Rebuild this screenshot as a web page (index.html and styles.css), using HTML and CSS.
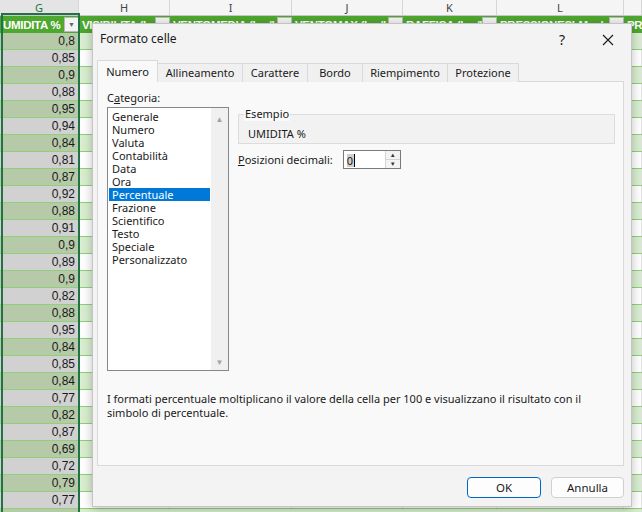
FILE: index.html
```html
<!DOCTYPE html>
<html lang="it">
<head>
  <meta charset="UTF-8" />
  <title>Formato celle</title>
  <link rel="stylesheet" href="styles.css">
</head>
<body>

  <div class="sheet">
    <div class="letters">
      <span class="sel">G</span><span>H</span><span>I</span><span>J</span><span>K</span><span>L</span><span></span>
    </div>
    <div class="heads">
      <span class="hd"><b>UMIDITA %</b><em>▼</em></span>
      <span class="hd"><b>VISIBILITA (km</b><em>▼</em></span>
      <span class="hd"><b>VENTOMEDIA (km/h</b><em>▼</em></span>
      <span class="hd"><b>VENTOMAX (km/h</b><em>▼</em></span>
      <span class="hd"><b>RAFFICA (km/h</b><em>▼</em></span>
      <span class="hd"><b>PRESSIONESLM mb</b><em>▼</em></span>
      <span class="hd"><b>PRE</b></span>
    </div>
    <div class="row odd"><span class="g">0,8</span><span></span><span></span><span></span><span></span><span></span><span></span></div>
    <div class="row"><span class="g">0,85</span><span></span><span></span><span></span><span></span><span></span><span></span></div>
    <div class="row odd"><span class="g">0,9</span><span></span><span></span><span></span><span></span><span></span><span></span></div>
    <div class="row"><span class="g">0,88</span><span></span><span></span><span></span><span></span><span></span><span></span></div>
    <div class="row odd"><span class="g">0,95</span><span></span><span></span><span></span><span></span><span></span><span></span></div>
    <div class="row"><span class="g">0,94</span><span></span><span></span><span></span><span></span><span></span><span></span></div>
    <div class="row odd"><span class="g">0,84</span><span></span><span></span><span></span><span></span><span></span><span></span></div>
    <div class="row"><span class="g">0,81</span><span></span><span></span><span></span><span></span><span></span><span></span></div>
    <div class="row odd"><span class="g">0,87</span><span></span><span></span><span></span><span></span><span></span><span></span></div>
    <div class="row"><span class="g">0,92</span><span></span><span></span><span></span><span></span><span></span><span></span></div>
    <div class="row odd"><span class="g">0,88</span><span></span><span></span><span></span><span></span><span></span><span></span></div>
    <div class="row"><span class="g">0,91</span><span></span><span></span><span></span><span></span><span></span><span></span></div>
    <div class="row odd"><span class="g">0,9</span><span></span><span></span><span></span><span></span><span></span><span></span></div>
    <div class="row"><span class="g">0,89</span><span></span><span></span><span></span><span></span><span></span><span></span></div>
    <div class="row odd"><span class="g">0,9</span><span></span><span></span><span></span><span></span><span></span><span></span></div>
    <div class="row"><span class="g">0,82</span><span></span><span></span><span></span><span></span><span></span><span></span></div>
    <div class="row odd"><span class="g">0,88</span><span></span><span></span><span></span><span></span><span></span><span></span></div>
    <div class="row"><span class="g">0,95</span><span></span><span></span><span></span><span></span><span></span><span></span></div>
    <div class="row odd"><span class="g">0,84</span><span></span><span></span><span></span><span></span><span></span><span></span></div>
    <div class="row"><span class="g">0,85</span><span></span><span></span><span></span><span></span><span></span><span></span></div>
    <div class="row odd"><span class="g">0,84</span><span></span><span></span><span></span><span></span><span></span><span></span></div>
    <div class="row"><span class="g">0,77</span><span></span><span></span><span></span><span></span><span></span><span></span></div>
    <div class="row odd"><span class="g">0,82</span><span></span><span></span><span></span><span></span><span></span><span></span></div>
    <div class="row"><span class="g">0,87</span><span></span><span></span><span></span><span></span><span></span><span></span></div>
    <div class="row odd"><span class="g">0,69</span><span></span><span></span><span></span><span></span><span></span><span></span></div>
    <div class="row"><span class="g">0,72</span><span></span><span></span><span></span><span></span><span></span><span></span></div>
    <div class="row odd"><span class="g">0,79</span><span></span><span></span><span></span><span></span><span></span><span></span></div>
    <div class="row"><span class="g">0,77</span><span></span><span></span><span></span><span></span><span></span><span></span></div>
    <div class="row odd"><span class="g"></span><span></span><span></span><span></span><span></span><span></span><span></span></div>
  </div>

  <!-- bordo della colonna selezionata -->
  <div class="sel-col"></div>

  <div class="dialog">
    <div class="titlebar">
      <span class="title">Formato celle</span>
      <span class="help">?</span>
      <span class="close">
        <svg width="12" height="12" viewBox="0 0 12 12"><path d="M1 1 L11 11 M11 1 L1 11" stroke="#1a1a1a" stroke-width="1.1" fill="none"/></svg>
      </span>
    </div>

    <div class="dlg-body">
      <div class="tabs">
        <span class="tab active">Numero</span>
        <span class="tab">Allineamento</span>
        <span class="tab">Carattere</span>
        <span class="tab">Bordo</span>
        <span class="tab">Riempimento</span>
        <span class="tab">Protezione</span>
      </div>

      <div class="panel">
        <div class="cols">
          <div class="left">
            <div class="lbl">C<u>a</u>tegoria:</div>
            <div class="listbox">
              <ul class="items">
                <li>Generale</li>
                <li>Numero</li>
                <li>Valuta</li>
                <li>Contabilità</li>
                <li>Data</li>
                <li>Ora</li>
                <li class="picked">Percentuale</li>
                <li>Frazione</li>
                <li>Scientifico</li>
                <li>Testo</li>
                <li>Speciale</li>
                <li>Personalizzato</li>
              </ul>
              <div class="scroll">
                <span>▲</span>
                <span>▼</span>
              </div>
            </div>
          </div>

          <div class="right">
            <fieldset class="sample">
              <legend>Esempio</legend>
              <div>UMIDITA %</div>
            </fieldset>
            <div class="decimals">
              <span><u>P</u>osizioni decimali:</span>
              <div class="spin">
                <span class="spin-val"><i>0</i></span>
                <span class="spin-btns"><em>▲</em><em>▼</em></span>
              </div>
            </div>
          </div>
        </div>

        <p class="desc">I formati percentuale moltiplicano il valore della cella per 100 e visualizzano il risultato con il<br>simbolo di percentuale.</p>
      </div>

      <div class="buttons">
        <button class="btn ok">OK</button>
        <button class="btn">Annulla</button>
      </div>
    </div>
  </div>

</body>
</html>
```

FILE: styles.css
```css
* {
  box-sizing: border-box;
}

body {
  margin: 0;
  width: 642px;
  height: 512px;
  overflow: hidden;
  background: #fff;
  font-family: "Noto Sans", "Liberation Sans", sans-serif;
  position: relative;
}

/* ---------- foglio ---------- */

.letters,
.heads,
.row {
  display: grid;
  grid-template-columns: 79px 91px 122px 111px 94px 127px 1fr;
}

.letters {
  height: 16px;
  background: #f5f5f5;
  border-bottom: 1px solid #c8c8c8;
}

.letters span {
  font-size: 11px;
  line-height: 15px;
  color: #444;
  text-align: center;
  border-right: 1px solid #d6d6d6;
}

.letters .sel {
  color: #217346;
  background: #e4e4e4;
}

.heads {
  height: 17px;
  background: #4ea72e;
  padding-left: 2px;
}

.hd {
  display: flex;
  align-items: center;
  overflow: hidden;
}

.hd b {
  flex: 1;
  overflow: hidden;
  white-space: nowrap;
  color: #fff;
  font-family: "Liberation Sans", sans-serif;
  font-size: 11.5px;
  padding-left: 1px;
  letter-spacing: -0.3px;
}

.hd em {
  font-style: normal;
  width: 15px;
  height: 15px;
  margin-right: 2px;
  background: #f3f3f3;
  border: 1px solid #b8b8b8;
  color: #666;
  font-size: 7px;
  line-height: 13px;
  text-align: center;
}

.row {
  height: 17px;
  border-bottom: 1px solid #8fd07a;
  background: #fff;
}

.row span {
  border-right: 1px solid #e2e2e2;
}

.row.odd span {
  background: #d9eed0;
}

.row .g {
  background: #d1d1d1;
  font-family: "Liberation Sans", sans-serif;
  font-size: 12px;
  line-height: 16px;
  color: #1a1a1a;
  text-align: right;
  padding-right: 4px;
  border-right: none;
}

.row.odd .g {
  background: #b6c9a9;
}

.sel-col {
  position: absolute;
  left: 1px;
  top: 13px;
  width: 79px;
  height: 520px;
  border: 2px solid #217346;
}

/* ---------- finestra ---------- */

.dialog {
  position: absolute;
  left: 92px;
  top: 23px;
  width: 540px;
  height: 484px;
  background: #f3f3f3;
  border: 1px solid #c4c4c4;
  box-shadow: 0 2px 10px rgba(0, 0, 0, 0.25);
  font-size: 11px;
  color: #1a1a1a;
}

.titlebar {
  height: 31px;
  display: flex;
  align-items: center;
  padding-left: 7px;
}

.title {
  flex: 1;
  font-size: 12px;
  margin-top: -2px;
}

.help {
  font-size: 14px;
  width: 46px;
  text-align: center;
}

.close {
  width: 46px;
  height: 31px;
  display: flex;
  align-items: center;
  justify-content: center;
}

.dlg-body {
  padding: 6px 7px 0 4px;
}

.tabs {
  display: flex;
  align-items: flex-end;
  height: 21px;
  margin-bottom: -1px;
  position: relative;
}

.tab {
  height: 19px;
  border: 1px solid #d9d9d9;
  border-bottom: none;
  margin-left: -1px;
  background: #f0f0f0;
  line-height: 18px;
  text-align: center;
}

.tab:nth-child(1) { width: 61px; margin-left: 0; }
.tab:nth-child(2) { width: 86px; }
.tab:nth-child(3) { width: 66px; }
.tab:nth-child(4) { width: 56px; }
.tab:nth-child(5) { width: 86px; }
.tab:nth-child(6) { width: 72px; }

.tab.active {
  height: 22px;
  background: #f9f9f9;
  line-height: 21px;
  position: relative;
  z-index: 1;
}

.panel {
  height: 385px;
  background: #f9f9f9;
  border: 1px solid #d9d9d9;
  padding: 9px 8px 0 9px;
}

.cols {
  display: flex;
  gap: 9px;
}

.left {
  width: 122px;
}

.lbl {
  line-height: 14px;
  margin-bottom: 2px;
}

.listbox {
  height: 264px;
  background: #fff;
  border: 1px solid #828790;
  display: flex;
}

.items {
  flex: 1;
  list-style: none;
  margin: 0;
  padding: 2px 1px 0 1px;
}

.items li {
  height: 13px;
  line-height: 13px;
  padding-left: 3px;
  white-space: nowrap;
}

.items li.picked {
  background: #0078d7;
  color: #fff;
}

.scroll {
  width: 17px;
  background: #f0f0f0;
  display: flex;
  flex-direction: column;
  justify-content: space-between;
  align-items: center;
  color: #a3a3a3;
  font-size: 8px;
  padding: 5px 0 3px;
}

.right {
  flex: 1;
  padding-top: 16px;
}

.sample {
  margin: 0;
  height: 37px;
  border: 1px solid #dcdcdc;
  background: #f2f2f2;
  padding: 5px 9px 0;
}

.sample legend {
  margin-left: -4px;
  padding: 0 1px;
  line-height: 14px;
  background: #f9f9f9;
}

.decimals {
  display: flex;
  align-items: center;
  gap: 10px;
  margin-top: 6px;
}

.spin {
  width: 58px;
  height: 19px;
  border: 1px solid #7a7a7a;
  background: #fff;
  display: flex;
}

.spin-val {
  flex: 1;
  padding: 2px 0 0 3px;
}

.spin-val i {
  font-style: normal;
  background: #cfcfcf;
  border-right: 1px solid #000;
  padding-right: 1px;
  line-height: 13px;
  display: inline-block;
}

.spin-btns {
  width: 15px;
  display: flex;
  flex-direction: column;
  border-left: 1px solid #d4d4d4;
}

.spin-btns em {
  flex: 1;
  font-style: normal;
  font-size: 6px;
  line-height: 8px;
  text-align: center;
  color: #333;
  background: #f3f3f3;
}

.spin-btns em + em {
  border-top: 1px solid #d4d4d4;
}

.desc {
  margin: 21px 0 0;
  line-height: 14px;
  font-size: 11px;
  white-space: nowrap;
}

.buttons {
  display: flex;
  justify-content: flex-end;
  gap: 10px;
  margin-top: 11px;
}

.btn {
  width: 73px;
  height: 21px;
  border: 1px solid #d0d0d0;
  border-radius: 4px;
  background: #fdfdfd;
  font-family: "Noto Sans", "Liberation Sans", sans-serif;
  font-size: 11.5px;
  color: #1a1a1a;
  padding: 0;
}

.btn.ok {
  width: 74px;
  border-color: #0067c0;
}
```
